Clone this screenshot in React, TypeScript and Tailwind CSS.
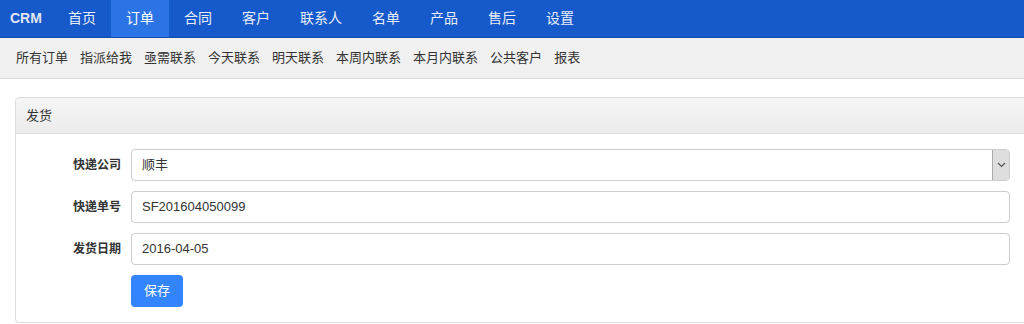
const navItems = ['首页', '订单', '合同', '客户', '联系人', '名单', '产品', '售后', '设置'];
const subItems = ['所有订单', '指派给我', '亟需联系', '今天联系', '明天联系', '本周内联系', '本月内联系', '公共客户', '报表'];

const font = { fontFamily: '"Liberation Sans", Arial, "Noto Sans CJK SC", sans-serif' };

export default function App() {
  return (
    <div className="w-[1024px] h-[324px] overflow-hidden bg-white text-[#333]" style={font}>
      {/* top nav */}
      <div className="h-[38px] bg-[#1559cb] border-b border-[#0f4bb0] flex items-stretch">
        <div className="w-[53px] pl-[10px] flex items-center text-[14px] font-bold text-[#e0e6f2]">CRM</div>
        {navItems.map((item) => (
          <div
            key={item}
            className={
              'px-[15px] flex items-center text-[14px] text-[#e8eef8] ' +
              (item === '订单' ? 'bg-[#2b74e6] text-white' : '')
            }
          >
            {item}
          </div>
        ))}
      </div>

      {/* sub nav */}
      <div className="h-[41px] bg-[#f0f0f0] border-b border-[#dcdcdc] flex items-center pl-[16px] gap-[12px] text-[13px] text-[#333]">
        {subItems.map((item) => (
          <span key={item}>{item}</span>
        ))}
      </div>

      {/* panel */}
      <div className="mt-[18px] ml-[15px] w-[1030px] border border-[#ddd] rounded-[4px] bg-white">
        <div className="h-[36px] pl-[10px] flex items-center text-[13px] text-[#333] bg-gradient-to-b from-[#f6f6f6] to-[#ebebeb] border-b border-[#ddd] rounded-t-[4px]">
          发货
        </div>
        <div className="pt-[15px] pb-[15px] flex flex-col gap-[10px]">
          <Row label="快递公司">
            <div className="flex-1 h-[32px] border border-[#ccc] rounded-[4px] flex items-stretch text-[13px]">
              <div className="flex-1 flex items-center pl-[10px] text-[#333]">顺丰</div>
              <div className="w-[17px] bg-[#dedede] border-l border-[#aaa] rounded-r-[3px] flex items-center justify-center">
                <svg width="9" height="6" viewBox="0 0 9 6" fill="none">
                  <path d="M1 1l3.5 3.5L8 1" stroke="#555" strokeWidth="1.2" />
                </svg>
              </div>
            </div>
          </Row>
          <Row label="快递单号">
            <div className="flex-1 h-[32px] border border-[#ccc] rounded-[4px] flex items-center pl-[10px] text-[13px] text-[#333]">
              SF201604050099
            </div>
          </Row>
          <Row label="发货日期">
            <div className="flex-1 h-[32px] border border-[#ccc] rounded-[4px] flex items-center pl-[10px] text-[13px] text-[#333]">
              2016-04-05
            </div>
          </Row>
          <div className="flex">
            <div className="w-[115px]" />
            <button className="h-[32px] w-[52px] rounded-[4px] bg-[#3385ff] text-white text-[13px] flex items-center justify-center">
              保存
            </button>
          </div>
        </div>
      </div>
    </div>
  );
}

function Row({ label, children }: { label: string; children: React.ReactNode }) {
  return (
    <div className="flex items-center pr-[34px]">
      <div className="w-[105px] text-right text-[12px] font-bold text-[#333]">{label}</div>
      <div className="w-[10px]" />
      {children}
    </div>
  );
}
